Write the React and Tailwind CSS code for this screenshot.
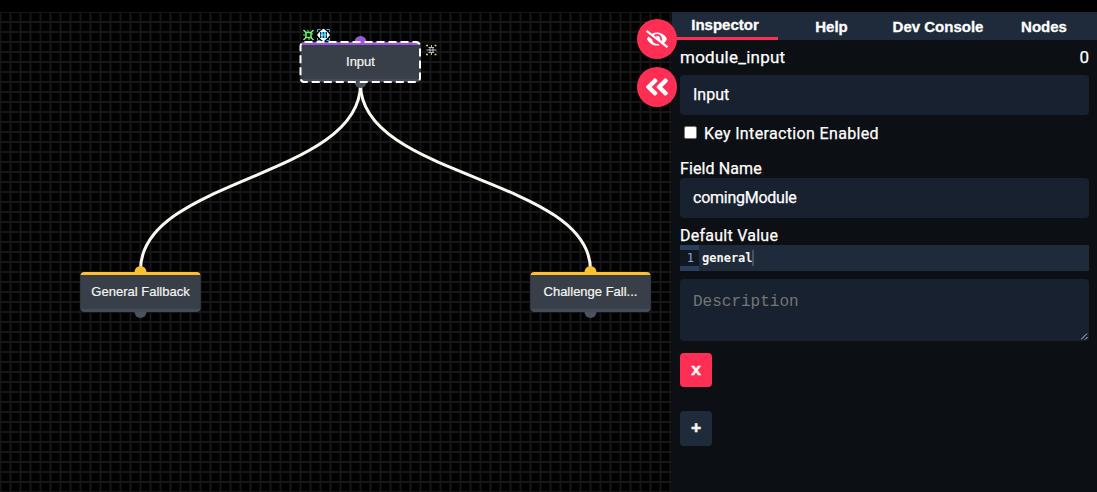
import React from "react";
import { FaEyeSlash, FaAngleDoubleLeft } from "react-icons/fa";

function FlowNode({ id, label, place, accent, selected }) {
  const fill = accent === "purple" ? "#9b59d9" : "#fdc02f";
  return (
    <div className={`absolute h-[52px] w-[122px] ${place}`}>
      <svg className="absolute inset-0" width="122" height="52" viewBox="0 0 122 52">
        <clipPath id={id}>
          <rect x="1.500" y="6" width="120" height="40" rx="4" />
        </clipPath>
        <circle cx="61.500" cy="6" r="6" fill={fill} />
        <circle cx="61.500" cy="46" r="6" fill="#4a515f" />
        <g clipPath={`url(#${id})`}>
          <rect x="1" y="6" width="121" height="40" fill="#454c59" />
          <rect x="1" y="6" width="121" height="3" fill={fill} />
          <rect x="1" y="9" width="121" height="34" fill="#393f49" />
        </g>
        {selected && (
          <rect x="1.500" y="6" width="119.500" height="40" rx="4" fill="none" stroke="#fff" strokeWidth="2" strokeDasharray="8 4" />
        )}
      </svg>
      <span className="absolute left-0 top-[17px] w-[123px] text-center text-[13px] leading-[18px] text-[#f5f6f0] [-webkit-text-stroke:0.2px_#f5f6f0]">{label}</span>
    </div>
  );
}

function NodeTools() {
  return (
    <svg className="absolute left-[300px] top-[26px]" width="142" height="34" viewBox="0 0 142 34">
      <g stroke="#6df36d" strokeWidth="1.5" fill="none">
        <rect x="6" y="6.500" width="5" height="5" />
        <path d="M3.500 4l3 3M13.500 4l-3 3M3.500 14l3-3M13.500 14l-3-3" />
        <path d="M8 4v2M13 8h-2M3 9h3M9 12v2" strokeWidth="1" />
      </g>
      <path d="M17.500 6V3.500h3M26.500 3.500h3V6M17.500 12v2.500h3M26.500 14.500h3V12" stroke="#36b9e8" fill="none" />
      <path d="M23.500 2.500l4 3.500h-8zM23.500 15.500l4-3.500h-8zM17 9l3-3.500v7zM30 9l-3-3.500v7z" fill="#fff" />
      <rect x="20.500" y="6" width="6" height="6" fill="#15394a" />
      <path d="M22 6v6M25 6v6" stroke="#36c5f0" strokeWidth="2" />
      <path d="M20.500 9h6" stroke="#dff6ff" strokeWidth="0.8" />
      <path d="M126 19.500h2M134.500 19.500h2M126 28.500h2M134.500 28.500h2" stroke="#d8d44a" strokeWidth="1.5" />
      <path d="M126.500 24h10M128.500 21.500h5.500M128.500 26.500h5.500" stroke="#b9b9b9" />
      <path d="M130 21v6M133 21v6M131.500 19v2M131.500 27v2" stroke="#b9b9b9" />
    </svg>
  );
}

function Canvas() {
  return (
    <div className="relative h-[480px] w-[672px] shrink-0 overflow-hidden bg-black font-['Liberation_Sans',Arial,sans-serif]">
      <svg className="absolute inset-0" width="672" height="480">
        <defs>
          <pattern id="grid" width="10" height="10" patternUnits="userSpaceOnUse" x="-0.5" y="-1">
            <path d="M0 1h10M1 0v10" stroke="#161616" strokeWidth="2" />
          </pattern>
        </defs>
        <rect width="672" height="480" fill="url(#grid)" />
      </svg>
      <svg className="absolute -top-3 left-0" width="672" height="492" fill="none" stroke="#fafaf2" strokeWidth="3">
        <path d="M360.500 84C360.500 178 140.500 178 140.500 270" />
        <path d="M360.500 84C360.500 178 590.500 178 590.500 270" />
      </svg>
      <div className="absolute -top-3 left-0">
        <FlowNode id="node-input" label="Input" place="left-[299px] top-[36px]" accent="purple" selected />
        <FlowNode id="node-general" label="General Fallback" place="left-[79px] top-[266px]" accent="yellow" />
        <FlowNode id="node-challenge" label="Challenge Fall..." place="left-[529px] top-[266px]" accent="yellow" />
        <NodeTools />
      </div>
    </div>
  );
}

function RoundButton({ children }) {
  return <button className="flex size-10 items-center justify-center rounded-full bg-[#ff2e55] text-white">{children}</button>;
}

function Inspector() {
  return (
    <aside className="relative flex h-[480px] w-[425px] flex-col bg-[#0c0f13] font-['Roboto',sans-serif] text-[16px] font-[450] text-white">
      <nav className="flex h-7 shrink-0 bg-[#1f2b3b] font-['Liberation_Sans',Arial,sans-serif] text-[15px] font-bold leading-[27px] [-webkit-text-stroke:0.3px_white]">
        <div className="w-[106px] border-b-[3px] border-[#ff2e55] text-center leading-[26px]">Inspector</div>
        <div className="w-[107px] pt-px text-center">Help</div>
        <div className="w-[106px] pt-px text-center">Dev Console</div>
        <div className="w-[106px] pt-px text-center">Nodes</div>
      </nav>
      <div className="absolute -left-[35px] top-[7px] flex flex-col gap-2">
        <RoundButton><FaEyeSlash size={22} /></RoundButton>
        <RoundButton><FaAngleDoubleLeft size={28} /></RoundButton>
      </div>
      <div className="flex flex-col px-2 [-webkit-text-stroke:0.25px_currentColor]">
        <div className="flex h-[35px] items-center justify-between"><span className="text-[17px] tracking-[0.25px]">module_input</span><span className="text-[17px]">0</span></div>
        <div className="flex h-10 items-center rounded bg-[#18212f] px-[13px]">Input</div>
        <label className="flex h-9 items-center gap-[7px] pl-1">
          <span className="-mt-px size-[13px] rounded-[2px] border border-[#767676] bg-white" />
          <span className="mt-px tracking-[0.35px]">Key Interaction Enabled</span>
        </label>
        <div className="mt-[6px] h-[21px] leading-[23px] tracking-[0.1px]">Field Name</div>
        <div className="flex h-10 items-center rounded bg-[#18212f] px-[13px] tracking-[-0.25px]">comingModule</div>
        <div className="mt-[6px] h-[21px] leading-[23px] tracking-[0.25px]">Default Value</div>
        <div className="flex h-[26px] items-center bg-[#1f2b3b] font-['DejaVu_Sans_Mono',monospace] text-[12px] [-webkit-text-stroke:0]">
          <div className="flex h-[26px] w-[19px] items-center bg-[#293f60]">
            <span className="h-4 w-full bg-[#111820] pr-[5px] text-right font-normal leading-4 text-[#8ca6d4]">1</span>
          </div>
          <span className="pl-[3px] font-bold leading-4 text-[#f8f8f2]">general</span>
          <span className="-ml-px h-4 w-[2px] bg-[#45525f]" />
        </div>
        <div className="relative mt-2 h-[62px] rounded bg-[#18212f] px-[13px] pt-[14px] font-['Liberation_Mono',monospace] text-[16px] font-normal leading-[18px] text-[#757575] [-webkit-text-stroke:0]">
          Description
          <svg className="absolute bottom-px right-px" width="7" height="7" stroke="#c5c7ca"><path d="M0 6.500l6-6M4 6.500l2.500-2.500" /></svg>
        </div>
        <button className="mt-3 h-[34px] w-8 rounded bg-[#ff2e55] pt-px font-['Liberation_Mono',monospace] text-[17px] font-bold text-[#f8f8f2] [-webkit-text-stroke:0.5px_#f8f8f2]">x</button>
        <button className="mt-6 h-[35px] w-8 rounded bg-[#1f2b3b] font-['Liberation_Mono',monospace] text-[17px] font-bold text-[#f8f8f2] [-webkit-text-stroke:0.6px_#f8f8f2]">+</button>
      </div>
    </aside>
  );
}

export default function App() {
  return (
    <main className="h-[492px] w-[1097px] overflow-hidden bg-black pt-3">
      <div className="flex"><Canvas /><Inspector /></div>
    </main>
  );
}
